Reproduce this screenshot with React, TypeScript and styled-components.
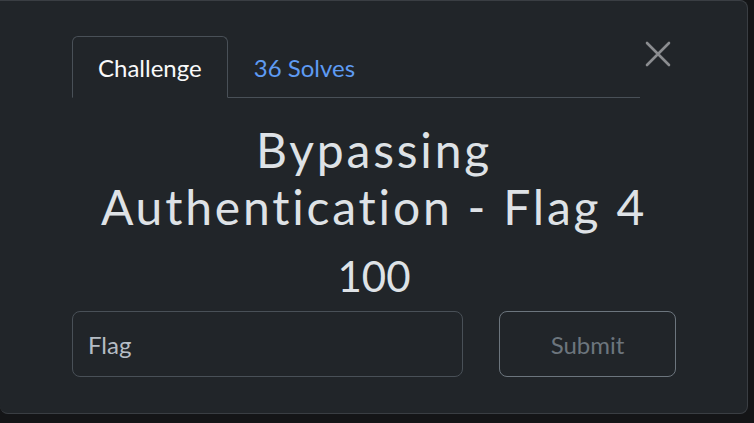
import React from 'react';
import styled, { createGlobalStyle } from 'styled-components';

const GlobalStyle = createGlobalStyle`
  html, body {
    margin: 0;
    padding: 0;
    background: #141517;
    font-family: Lato, "Open Sans", "Liberation Sans", sans-serif;
  }
  * { box-sizing: border-box; }
`;

const Modal = styled.div`
  width: 748px;
  height: 414px;
  background: #212529;
  border: 1px solid #3a3e43;
  border-left: none;
  border-radius: 0 8px 8px 8px;
  padding: 35px 71px 0 72px;
  display: flex;
  flex-direction: column;
`;

const Header = styled.div`
  display: flex;
  align-items: flex-start;
`;

const Tabs = styled.div`
  width: 568px;
  height: 62px;
  display: flex;
  border-bottom: 1px solid #495057;
`;

const Tab = styled.div<{ $active?: boolean }>`
  height: 62px;
  padding: 0 25px;
  display: flex;
  align-items: center;
  font-size: 24px;
  margin-bottom: -1px;
  color: ${(p) => (p.$active ? '#f8f9fa' : '#5e9bf3')};
  border: 1px solid ${(p) => (p.$active ? '#495057' : 'transparent')};
  border-bottom-color: ${(p) => (p.$active ? '#212529' : 'transparent')};
  border-radius: 6px 6px 0 0;
  background: ${(p) => (p.$active ? '#212529' : 'transparent')};
`;

const Close = styled.button`
  margin: 5px 0 0 5px;
  width: 26px;
  height: 26px;
  padding: 0;
  border: none;
  background: none;
  display: flex;
  align-items: center;
  justify-content: center;
`;

const Title = styled.h2`
  margin: 23px 0 0;
  text-align: center;
  font-weight: 400;
  font-size: 48px;
  line-height: 57px;
  letter-spacing: 2.8px;
  color: #dee2e6;
`;

const Value = styled.h3`
  margin: 17px 0 0;
  text-align: center;
  font-weight: 400;
  font-size: 42px;
  line-height: 48px;
  color: #dee2e6;
`;

const Form = styled.div`
  margin-top: 11px;
  display: flex;
  justify-content: space-between;
`;

const Input = styled.input`
  width: 391px;
  height: 66px;
  background: #212529;
  border: 1px solid #495057;
  border-radius: 8px;
  padding: 0 15px;
  font-family: inherit;
  font-size: 24px;
  color: #dee2e6;
  &::placeholder { color: #b5bcc4; }
`;

const Submit = styled.button`
  width: 177px;
  height: 66px;
  background: transparent;
  border: 1px solid #6c757d;
  border-radius: 8px;
  font-family: inherit;
  font-size: 24px;
  color: #6c757d;
`;

export default function App() {
  return (
    <>
      <GlobalStyle />
      <Modal>
        <Header>
          <Tabs>
            <Tab $active>Challenge</Tab>
            <Tab>36 Solves</Tab>
          </Tabs>
          <Close aria-label="Close">
            <svg width="26" height="26" viewBox="0 0 26 26">
              <path d="M2 2 L24 24 M24 2 L2 24" stroke="#8b8d90" strokeWidth="2.6" strokeLinecap="round" />
            </svg>
          </Close>
        </Header>
        <Title>
          Bypassing
          <br />
          Authentication - Flag 4
        </Title>
        <Value>100</Value>
        <Form>
          <Input placeholder="Flag" />
          <Submit disabled>Submit</Submit>
        </Form>
      </Modal>
    </>
  );
}
